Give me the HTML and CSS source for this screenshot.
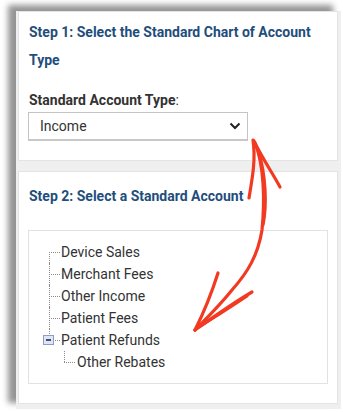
FILE: index.html
```html
<!DOCTYPE html>
<html lang="en">
<head>
  <meta charset="UTF-8" />
  <meta name="viewport" content="width=device-width, initial-scale=1" />
  <title>Chart of Accounts</title>
  <link rel="stylesheet" href="styles.css">
</head>
<body>
  <div class="screen">
    <div class="panel panel-one">
      <h3 class="step-title">Step 1: Select the Standard Chart of Account Type</h3>
      <div class="field-label">Standard Account Type<span class="colon">:</span></div>
      <div class="select">
        <span>Income</span>
        <svg class="chevron" viewBox="0 0 12 8"><path d="M1.5 1.5 L6 6 L10.5 1.5" fill="none" stroke="#222" stroke-width="2"/></svg>
      </div>
    </div>

    <div class="panel panel-two">
      <h3 class="step-title">Step 2: Select a Standard Account</h3>
      <div class="tree">
        <ul>
          <li>Device Sales</li>
          <li>Merchant Fees</li>
          <li>Other Income</li>
          <li>Patient Fees</li>
          <li class="open">
            <span class="toggle"></span>Patient Refunds
            <ul>
              <li>Other Rebates</li>
            </ul>
          </li>
        </ul>
      </div>
    </div>
  </div>

  <!-- red hand drawn arrow over the screenshot -->
  <svg class="scribble" viewBox="0 0 343 412">
    <g fill="none" stroke="#f23a22" stroke-width="3.2" stroke-linecap="round" stroke-linejoin="round">
      <path d="M253 140 C 256 160, 252 180, 249 198"/>
      <path d="M254 141 C 262 158, 272 172, 280 187"/>
      <path d="M255 143 C 264 165, 265 200, 262 230 C 258 255, 248 272, 232 290 C 220 305, 205 320, 195 330"/>
      <path d="M258 150 C 266 175, 267 205, 263 225"/>
      <path d="M218 273 C 212 292, 204 312, 195 330"/>
      <path d="M252 292 C 235 302, 212 318, 195 330"/>
      <path d="M247 296 C 232 306, 214 318, 198 327"/>
    </g>
  </svg>
</body>
</html>
```

FILE: styles.css
```css
body {
  margin: 0;
  background: #ffffff;
  font-family: Roboto, "Liberation Sans", Arial, sans-serif;
  color: #333;
  position: relative;
  width: 343px;
  height: 412px;
  overflow: hidden;
}
.screen {
  margin: 11px 2px 0 16px;
  padding: 0 3px 5px 2px;
  background: #efefef;
  box-shadow: -8px -6px 6px rgba(0,0,0,0.42);
}
.panel {
  background: #ffffff;
  border: 1px solid #e4e4e4;
  padding: 0 10px;
}
.panel-one {
  padding-top: 6px;
  padding-bottom: 19px;
}
.panel-two {
  margin-top: 10px;
  padding-top: 10px;
  padding-bottom: 19px;
}
.step-title {
  margin: 0;
  font-size: 14px;
  font-weight: 700;
  line-height: 28px;
  color: #1f4e7c;
}
.field-label {
  margin-top: 17px;
  font-size: 14px;
  font-weight: 700;
  line-height: 18px;
  color: #333;
}
.colon {
  font-weight: 400;
}
.select {
  margin-top: 3px;
  margin-left: -1px;
  width: 220px;
  height: 29px;
  box-sizing: border-box;
  border: 1px solid #c4c4c4;
  border-bottom: 2px solid #c8c8c8;
  display: flex;
  align-items: center;
  justify-content: space-between;
  padding: 0 6px 0 11px;
  font-size: 14px;
  color: #333;
}
.chevron {
  width: 12px;
  height: 8px;
}
.tree {
  margin-top: 20px;
  margin-left: -1px;
  width: 300px;
  box-sizing: border-box;
  border: 1px solid #e2e2e2;
}
.tree ul {
  list-style: none;
  margin: 0;
  padding: 10px 0 10px 20px;
}
.tree li {
  position: relative;
  padding-left: 12px;
  font-size: 14px;
  line-height: 22px;
  color: #333;
}
.tree li::before {
  content: '';
  position: absolute;
  left: 0;
  top: 11px;
  width: 11px;
  border-top: 1px dotted #8a8a8a;
}
.tree li::after {
  content: '';
  position: absolute;
  left: 0;
  top: 0;
  height: 22px;
  border-left: 1px dotted #8a8a8a;
}
.tree > ul > li:first-child::after {
  top: 11px;
  height: 11px;
}
.tree li.open::after {
  height: 11px;
}
.tree li ul {
  padding: 0 0 0 3px;
}
.tree li li {
  padding-left: 13px;
}
.tree li li::after {
  height: 11px;
}
.toggle {
  position: absolute;
  left: -6px;
  top: 6px;
  width: 11px;
  height: 10px;
  box-sizing: border-box;
  border: 1px solid #8d9cc0;
  background: #dfe5f2;
  z-index: 1;
}
.toggle::after {
  content: '';
  position: absolute;
  left: 2px;
  top: 3px;
  width: 5px;
  height: 2px;
  background: #3b4f80;
}
.scribble {
  position: absolute;
  left: 0;
  top: 0;
  width: 343px;
  height: 412px;
  pointer-events: none;
}
```
